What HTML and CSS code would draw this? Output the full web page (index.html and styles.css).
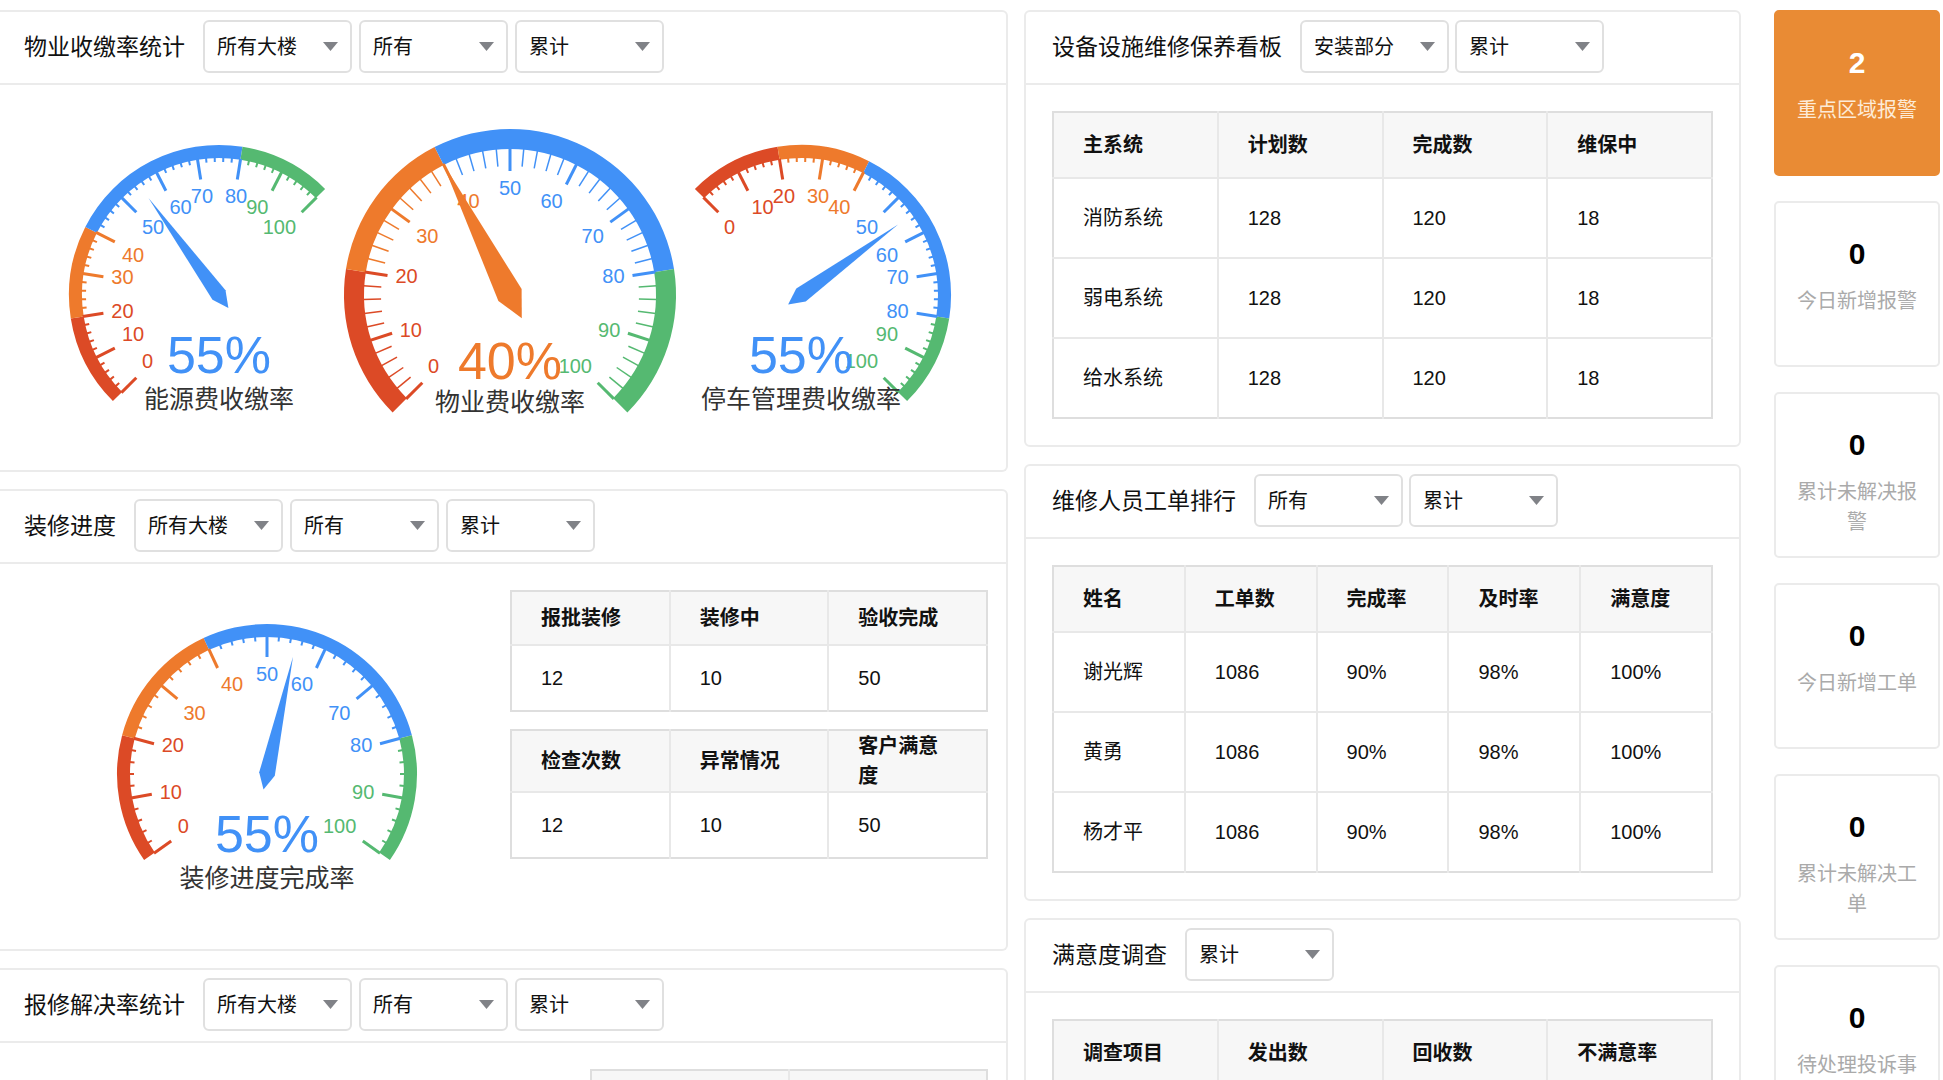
FILE: index.html
```html
<!DOCTYPE html>
<html lang="zh-CN">
<head>
<meta charset="utf-8">
<meta name="viewport" content="width=device-width, initial-scale=1">
<title>物业看板</title>
<link rel="stylesheet" href="styles.css">
</head>
<body>
<main class="dashboard">
  <div class="column column-wide">
    <section class="panel">
      <header class="panel-header">
        <h2 class="panel-title">物业收缴率统计</h2>
        <div class="filters">
          <select class="filter" aria-label="大楼"><option>所有大楼</option></select>
          <select class="filter" aria-label="类型"><option>所有</option></select>
          <select class="filter" aria-label="时间"><option>累计</option></select>
        </div>
      </header>
      <div class="gauge-row">
        <figure class="gauge-box"><svg class="gauge" data-gauge="energy"></svg></figure>
        <figure class="gauge-box"><svg class="gauge" data-gauge="property"></svg></figure>
        <figure class="gauge-box"><svg class="gauge" data-gauge="parking"></svg></figure>
      </div>
    </section>

    <section class="panel">
      <header class="panel-header">
        <h2 class="panel-title">装修进度</h2>
        <div class="filters">
          <select class="filter" aria-label="大楼"><option>所有大楼</option></select>
          <select class="filter" aria-label="类型"><option>所有</option></select>
          <select class="filter" aria-label="时间"><option>累计</option></select>
        </div>
      </header>
      <div class="progress-body">
        <figure class="gauge-box"><svg class="gauge" data-gauge="decoration"></svg></figure>
        <div class="progress-tables">
          <table class="grid-table compact">
            <thead><tr><th>报批装修</th><th>装修中</th><th>验收完成</th></tr></thead>
            <tbody><tr><td>12</td><td>10</td><td>50</td></tr></tbody>
          </table>
          <table class="grid-table compact">
            <thead><tr><th>检查次数</th><th>异常情况</th><th>客户满意度</th></tr></thead>
            <tbody><tr><td>12</td><td>10</td><td>50</td></tr></tbody>
          </table>
        </div>
      </div>
    </section>

    <section class="panel">
      <header class="panel-header">
        <h2 class="panel-title">报修解决率统计</h2>
        <div class="filters">
          <select class="filter" aria-label="大楼"><option>所有大楼</option></select>
          <select class="filter" aria-label="类型"><option>所有</option></select>
          <select class="filter" aria-label="时间"><option>累计</option></select>
        </div>
      </header>
      <div class="repair-body">
        <table class="grid-table compact">
          <thead><tr><th></th><th></th></tr></thead>
          <tbody><tr><td></td><td></td></tr></tbody>
        </table>
      </div>
    </section>
  </div>

  <div class="column column-mid">
    <section class="panel">
      <header class="panel-header">
        <h2 class="panel-title">设备设施维修保养看板</h2>
        <div class="filters">
          <select class="filter" aria-label="系统"><option>安装部分</option></select>
          <select class="filter" aria-label="时间"><option>累计</option></select>
        </div>
      </header>
      <div class="table-body">
        <table class="grid-table">
          <thead><tr><th>主系统</th><th>计划数</th><th>完成数</th><th>维保中</th></tr></thead>
          <tbody>
            <tr><td>消防系统</td><td>128</td><td>120</td><td>18</td></tr>
            <tr><td>弱电系统</td><td>128</td><td>120</td><td>18</td></tr>
            <tr><td>给水系统</td><td>128</td><td>120</td><td>18</td></tr>
          </tbody>
        </table>
      </div>
    </section>

    <section class="panel">
      <header class="panel-header">
        <h2 class="panel-title">维修人员工单排行</h2>
        <div class="filters">
          <select class="filter" aria-label="类型"><option>所有</option></select>
          <select class="filter" aria-label="时间"><option>累计</option></select>
        </div>
      </header>
      <div class="table-body">
        <table class="grid-table">
          <thead><tr><th>姓名</th><th>工单数</th><th>完成率</th><th>及时率</th><th>满意度</th></tr></thead>
          <tbody>
            <tr><td>谢光辉</td><td>1086</td><td>90%</td><td>98%</td><td>100%</td></tr>
            <tr><td>黄勇</td><td>1086</td><td>90%</td><td>98%</td><td>100%</td></tr>
            <tr><td>杨才平</td><td>1086</td><td>90%</td><td>98%</td><td>100%</td></tr>
          </tbody>
        </table>
      </div>
    </section>

    <section class="panel">
      <header class="panel-header">
        <h2 class="panel-title">满意度调查</h2>
        <div class="filters">
          <select class="filter" aria-label="时间"><option>累计</option></select>
        </div>
      </header>
      <div class="table-body">
        <table class="grid-table">
          <thead><tr><th>调查项目</th><th>发出数</th><th>回收数</th><th>不满意率</th></tr></thead>
          <tbody><tr><td></td><td></td><td></td><td></td></tr></tbody>
        </table>
      </div>
    </section>
  </div>

  <ul class="stats">
    <li class="stat stat-alert"><strong class="stat-value">2</strong><span class="stat-label">重点区域报警</span></li>
    <li class="stat"><strong class="stat-value">0</strong><span class="stat-label">今日新增报警</span></li>
    <li class="stat"><strong class="stat-value">0</strong><span class="stat-label">累计未解决报警</span></li>
    <li class="stat"><strong class="stat-value">0</strong><span class="stat-label">今日新增工单</span></li>
    <li class="stat"><strong class="stat-value">0</strong><span class="stat-label">累计未解决工单</span></li>
    <li class="stat"><strong class="stat-value">0</strong><span class="stat-label">待处理投诉事件</span></li>
  </ul>
</main>
<script src="gauges.js"></script>
</body>
</html>
```

FILE: styles.css
```css
* {
  box-sizing: border-box;
}

body {
  margin: 0;
  background: #fff;
  color: #111;
  font: 20px/30px "Liberation Sans", "Noto Sans CJK SC", sans-serif;
}

.dashboard {
  display: grid;
  grid-template-columns: minmax(0, 1008fr) minmax(0, 734fr) 166px;
  column-gap: 16px;
  align-items: start;
  height: 100vh;
  padding: 10px 3px 0 0;
  overflow: auto;
  scrollbar-width: none;
}

.column {
  display: flex;
  flex-direction: column;
  gap: 17px;
}

.column-mid {
  padding-right: 17px;
}

/* Panels */
.panel {
  border: 2px solid #ebebeb;
  border-radius: 6px;
}

.column-wide .panel {
  border-left: 0;
  border-radius: 0 6px 6px 0;
}

.panel-header {
  display: flex;
  align-items: center;
  gap: 18px;
  padding: 8px 24px 10px;
  border-bottom: 2px solid #ebebeb;
}

.column-mid .panel-header {
  padding-left: 26px;
}

.panel-title {
  margin: 0;
  font-size: 23px;
  font-weight: 400;
}

.filters {
  display: flex;
  gap: 7px;
}

.column-mid .filters {
  gap: 6px;
}

.filter {
  appearance: none;
  width: 149px;
  height: 53px;
  padding: 0 36px 0 12px;
  border: 2px solid #e0e0e0;
  border-radius: 6px;
  background: #fff url("data:image/svg+xml,%3Csvg xmlns='http://www.w3.org/2000/svg' width='15' height='9'%3E%3Cpath d='M0 0h15L7.500 9z' fill='%23808287'/%3E%3C/svg%3E") no-repeat right 12px center;
  color: inherit;
  font: inherit;
}

/* Gauges */
.gauge-row {
  display: grid;
  grid-template-columns: repeat(3, minmax(0, 1fr));
  padding: 0 60px 0 73px;
}

.gauge-box {
  display: flex;
  justify-content: center;
  margin: 0;
}

.gauge {
  display: block;
  flex: none;
  width: 290px;
  height: 385px;
  overflow: visible;
}

.gauge-scale {
  font-size: 20px;
}

.gauge-value {
  font-size: 52px;
  text-anchor: middle;
}

.gauge-name {
  font-size: 25px;
  fill: #333;
  text-anchor: middle;
}

.progress-body {
  display: grid;
  grid-template-columns: minmax(0, 486fr) minmax(0, 478fr);
  padding: 0 18px 0 24px;
}

.progress-tables {
  display: flex;
  flex-direction: column;
  gap: 17px;
  padding-top: 26px;
}

.repair-body {
  display: flex;
  justify-content: flex-end;
  padding: 26px 18px;
}

.repair-body .grid-table {
  width: 41%;
}

/* Tables */
.table-body {
  padding: 26px;
}

.grid-table {
  width: 100%;
  table-layout: fixed;
  border-collapse: collapse;
  border: 2px solid #dedede;
}

.grid-table th,
.grid-table td {
  height: 80px;
  padding: 0 29px;
  text-align: left;
}

.grid-table th {
  height: 66px;
  background: #f7f7f7;
  font-weight: 700;
}

.grid-table.compact td {
  height: 66px;
}

.grid-table.compact th {
  height: 54px;
  padding-right: 32px;
}

.grid-table th + th,
.grid-table td + td {
  border-left: 2px solid #e8e8e8;
}

.grid-table td {
  border-top: 2px solid #e8e8e8;
}

/* Counters */
.stats {
  display: flex;
  flex-direction: column;
  gap: 25px;
  margin: 0;
  padding: 0;
  list-style: none;
}

.stat {
  display: flex;
  flex-direction: column;
  gap: 12px;
  min-height: 166px;
  padding: 31px 20px 0;
  border: 2px solid #ebebeb;
  border-radius: 5px;
  text-align: center;
}

.stat-value {
  color: #000;
  font-size: 30px;
  line-height: 40px;
}

.stat-label {
  color: #aaa;
}

.stat-alert {
  border-color: #e98b34;
  background: #e98b34;
}

.stat-alert .stat-value {
  color: #fff;
}

.stat-alert .stat-label {
  color: #fdebd8;
}
```

FILE: gauges.js
```js
const CENTER_X = 145;
const CENTER_Y = 210;

const BANDS = [
  { to: 20, color: '#dc4a26' },
  { to: 40, color: '#ee7a2c' },
  { to: 80, color: '#4191f7' },
  { to: 100, color: '#55b971' }
];

const SMALL = { radius: 150, band: 13, split: 20, tick: 4, tickWidth: 2, pointer: 120, pointerWidth: 8, nameY: 104 };
const LARGE = { radius: 166, band: 20, split: 22, tick: 17, tickWidth: 1.5, pointer: 149, pointerWidth: 13, nameY: 107 };

const GAUGES = {
  energy: { ...SMALL, start: 225, end: 45, value: 55, name: '能源费收缴率' },
  property: { ...LARGE, start: 225, end: -45, value: 40, name: '物业费收缴率' },
  parking: { ...SMALL, start: 135, end: -45, value: 55, name: '停车管理费收缴率' },
  decoration: { ...SMALL, start: 215, end: -35, value: 55, name: '装修进度完成率' }
};

const colorAt = value => BANDS.find(band => value <= band.to).color;

function point(angle, radius) {
  const rad = angle * Math.PI / 180;
  return [CENTER_X + Math.cos(rad) * radius, CENTER_Y - Math.sin(rad) * radius];
}

const pair = (angle, radius) => point(angle, radius).map(n => n.toFixed(1)).join(' ');

function drawGauge(g) {
  const angleAt = value => g.start + (g.end - g.start) * value / 100;
  const inner = g.radius - g.band;
  const parts = [];

  let from = 0;
  for (const { to, color } of BANDS) {
    const a = angleAt(from);
    const b = angleAt(to);
    parts.push(`<path fill="${color}" d="M${pair(a, g.radius)}A${g.radius} ${g.radius} 0 0 1 ${pair(b, g.radius)}L${pair(b, inner)}A${inner} ${inner} 0 0 0 ${pair(a, inner)}z"/>`);
    from = to;
  }

  for (let value = 0; value <= 100; value += 2) {
    const major = value % 10 === 0;
    const a = angleAt(value);
    const length = major ? g.split : g.tick;
    parts.push(`<path stroke="${colorAt(value)}" stroke-width="${major ? 3 : g.tickWidth}" d="M${pair(a, inner + 1)}L${pair(a, inner - length)}"/>`);
  }

  for (let value = 0; value <= 100; value += 10) {
    const a = angleAt(value);
    const [x, y] = point(a, inner - g.split - 8);
    const dx = Math.cos(a * Math.PI / 180);
    const dy = Math.sin(a * Math.PI / 180);
    const anchor = dx < -0.4 ? 'start' : dx > 0.4 ? 'end' : 'middle';
    const shift = dy > 0.4 ? 16 : dy < -0.4 ? -4 : 6;
    parts.push(`<text class="gauge-scale" fill="${colorAt(value)}" text-anchor="${anchor}" x="${x.toFixed(1)}" y="${(y + shift).toFixed(1)}">${value}</text>`);
  }

  const p = angleAt(g.value);
  parts.push(`<path fill="${colorAt(g.value)}" d="M${pair(p, g.pointer)}L${pair(p - 90, g.pointerWidth)}L${pair(p + 180, g.pointerWidth * 2)}L${pair(p + 90, g.pointerWidth)}z"/>`);

  parts.push(`<text class="gauge-value" fill="${colorAt(g.value)}" x="${CENTER_X}" y="${Math.round(CENTER_Y + g.radius * 0.4 + 18)}">${g.value}%</text>`);
  parts.push(`<text class="gauge-name" x="${CENTER_X}" y="${CENTER_Y + g.nameY + 9}">${g.name}</text>`);
  return parts.join('');
}

document.querySelectorAll('[data-gauge]').forEach(svg => {
  svg.setAttribute('viewBox', '0 0 290 385');
  svg.innerHTML = drawGauge(GAUGES[svg.dataset.gauge]);
});
```
